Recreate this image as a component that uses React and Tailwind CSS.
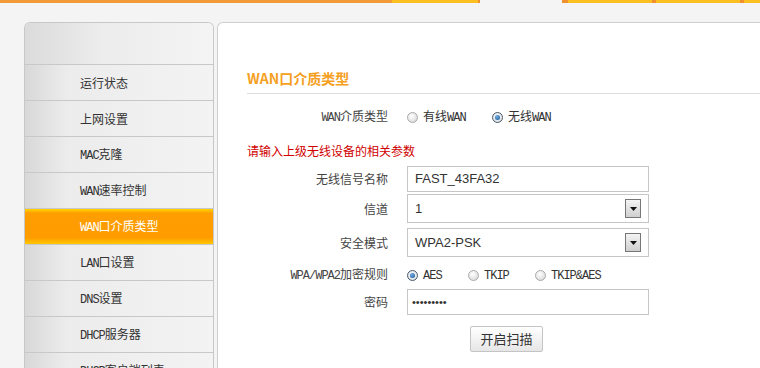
import React from "react";

const menu = [
  "运行状态",
  "上网设置",
  "MAC克隆",
  "WAN速率控制",
  "WAN口介质类型",
  "LAN口设置",
  "DNS设置",
  "DHCP服务器",
  "DHCP客户端列表",
];

// latin runs get a narrow mono face, like the bitmap font of the original
const Txt = ({ children }) =>
  children.split(/([A-Za-z0-9/&]+)/).map((p, i) =>
    /^[A-Za-z0-9/&]+$/.test(p) ? (
      <span key={i} className="font-['Liberation_Mono',monospace] text-[12px] tracking-[-1px]">
        {p}
      </span>
    ) : (
      <span key={i}>{p}</span>
    )
  );

const Radio = ({ checked }) =>
  checked ? (
    <span className="w-[11px] h-[11px] rounded-full border border-[#4a5866] bg-[radial-gradient(circle_at_50%_40%,#ffffff,#cfd6de)] flex items-center justify-center shrink-0">
      <span className="w-[5px] h-[5px] rounded-full bg-[radial-gradient(circle_at_40%_35%,#6fb0ea,#1a4f8a)]" />
    </span>
  ) : (
    <span className="w-[11px] h-[11px] rounded-full border border-[#a9a9a9] bg-[radial-gradient(circle_at_40%_35%,#ffffff,#d2d2d2)] shrink-0" />
  );

const Option = ({ checked, label, w }) => (
  <div className={`flex items-center ${w}`}>
    <Radio checked={checked} />
    <span className="ml-[5px] text-[12px] text-[#333]">
      <Txt>{label}</Txt>
    </span>
  </div>
);

const Row = ({ label, h, mt, children }) => (
  <div className={`flex items-center ${h} ${mt}`}>
    <div className="w-[141px] text-right text-[12px] text-[#444] shrink-0">
      <Txt>{label}</Txt>
    </div>
    <div className="ml-[19px] flex items-center h-full">{children}</div>
  </div>
);

const Select = ({ value }) => (
  <div className="w-[242px] h-full border border-[#c6c6c6] bg-white flex items-center pl-[7px] pr-[7px]">
    <span className="flex-1 text-[13px] text-[#333] font-['Liberation_Sans',sans-serif]">{value}</span>
    <span className="w-[16px] h-[19px] border border-[#777] bg-[linear-gradient(to_bottom,#f4f4f4,#cfcfcf)] flex items-center justify-center">
      <svg width="7" height="4" viewBox="0 0 7 4">
        <path d="M0 0H7L3.5 4Z" fill="#111" />
      </svg>
    </span>
  </div>
);

export default function App() {
  return (
    <div className="w-[760px] h-[368px] overflow-hidden bg-[#f4f4f4] font-['Noto_Sans_CJK_SC',sans-serif]">
      {/* top stripe */}
      <div className="flex h-[3px]">
        <div className="w-[392px] bg-[#f39a38]" />
        <div className="w-[86px] bg-[#fbbf22]" />
        <div className="w-[2px] bg-[#f0902e]" />
        <div className="w-[82px]" />
        <div className="w-[6px] bg-[#f0902e]" />
        <div className="w-[84px] bg-[#fbbf22]" />
        <div className="w-[4px] bg-[#f0902e]" />
        <div className="w-[84px] bg-[#fbbf22]" />
        <div className="w-[4px] bg-[#f0902e]" />
        <div className="flex-1 bg-[#fbbf22]" />
      </div>

      <div className="flex pt-[19px] pl-[24px]">
        {/* sidebar */}
        <div className="w-[190px] shrink-0 h-[346px] border border-b-0 border-[#c8c8c8] rounded-t-[6px] overflow-hidden">
          <div className="h-[41px] bg-[linear-gradient(to_right,#dbdbdb,#ececec_40%,#f4f4f4)]" />
          {menu.map((m) => {
            const active = m === "WAN口介质类型";
            return active ? (
              <div
                key={m}
                className="h-[36px] border-t border-[#c8c8c8] bg-[linear-gradient(to_bottom,#ffd400_0%,#ff9e00_12%,#ff9c00_82%,#ffc800_100%)] flex items-center pl-[55px] text-[12px] text-white"
              >
                <span><Txt>{m}</Txt></span>
              </div>
            ) : (
              <div
                key={m}
                className="h-[36px] border-t border-[#c8c8c8] bg-[linear-gradient(to_right,#d8d8d8,#ececec_22%,#f3f3f3)] flex items-center pl-[55px] text-[12px] text-[#333]"
              >
                <span><Txt>{m}</Txt></span>
              </div>
            );
          })}
        </div>

        {/* main panel */}
        <div className="ml-[3px] flex-1 h-[346px] bg-white border-t border-l border-[#cfcfcf] rounded-tl-[6px] pl-[29px] pt-[45px]">
          <div className="h-[26px] leading-[20px] border-b border-[#dedede] text-[14px] font-bold text-[#f5a01e]">
            WAN口介质类型
          </div>

          <Row label="WAN介质类型" h="h-[24px]" mt="mt-[11px]">
            <Option checked={false} label="有线WAN" w="w-[85px]" />
            <Option checked label="无线WAN" w="w-[85px]" />
          </Row>

          <div className="mt-[13px] h-[18px] leading-[18px] text-[12px] text-[#d00000]">
            请输入上级无线设备的相关参数
          </div>

          <Row label="无线信号名称" h="h-[26px]" mt="mt-[6px]">
            <div className="w-[242px] h-full border border-[#c6c6c6] flex items-center pl-[7px] text-[13px] text-[#333] font-['Liberation_Sans',sans-serif]">
              FAST_43FA32
            </div>
          </Row>

          <Row label="信道" h="h-[29px]" mt="mt-[2px]">
            <Select value="1" />
          </Row>

          <Row label="安全模式" h="h-[29px]" mt="mt-[5px]">
            <Select value="WPA2-PSK" />
          </Row>

          <Row label="WPA/WPA2加密规则" h="h-[24px]" mt="mt-[6px]">
            <Option checked label="AES" w="w-[61px]" />
            <Option checked={false} label="TKIP" w="w-[67px]" />
            <Option checked={false} label="TKIP&AES" w="w-[80px]" />
          </Row>

          <Row label="密码" h="h-[26px]" mt="mt-[2px]">
            <div className="w-[242px] h-full border border-[#c6c6c6] flex items-center pl-[4px] text-[11px] text-[#333] font-['Liberation_Sans',sans-serif]">
              •••••••••
            </div>
          </Row>

          <div className="mt-[10px] ml-[223px]">
            <button className="w-[73px] h-[26px] border border-[#c4c4c4] rounded-[2px] bg-[linear-gradient(to_bottom,#ffffff,#e6e6e6)] text-[13px] text-[#333]">
              开启扫描
            </button>
          </div>
        </div>
      </div>
    </div>
  );
}
